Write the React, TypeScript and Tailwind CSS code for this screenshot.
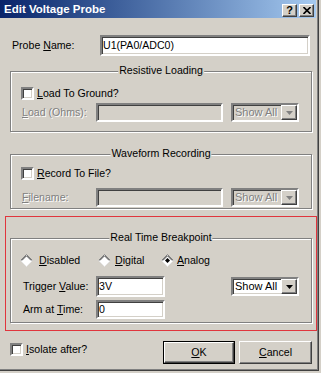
import React from "react";

const sunken =
  "border-2 border-t-[#808080] border-l-[#808080] border-b-white border-r-white shadow-[inset_1px_1px_0_#404040,inset_-1px_-1px_0_#d4d0c8]";
const raised =
  "border border-t-white border-l-white border-b-[#404040] border-r-[#404040] shadow-[inset_-1px_-1px_0_#808080]";
const grayText = "text-[#808080] [text-shadow:1px_1px_0_#ffffff]";

const Checkbox = () => <div className={`w-[13px] h-[13px] shrink-0 bg-white ${sunken}`} />;

const Radio = ({ checked }: { checked?: boolean }) => (
  <svg width="13" height="13" viewBox="0 0 13 13" className="shrink-0">
    <polygon points="6.5,0.5 12.5,6.5 6.5,12.5 0.5,6.5" fill="#fff" />
    <path d="M0.5 6.5 L6.5 0.5 L12.5 6.5" stroke="#808080" fill="none" />
    <path d="M1.8 6.5 L6.5 1.8 L11.2 6.5" stroke="#404040" fill="none" />
    <path d="M0.5 6.5 L6.5 12.5 L12.5 6.5" stroke="#e8e8e8" fill="none" />
    {checked && <polygon points="6.5,4 9,6.5 6.5,9 4,6.5" fill="#000" />}
  </svg>
);

const Combo = ({ disabled }: { disabled?: boolean }) => (
  <div className={`flex items-stretch w-[68px] h-[19px] ${sunken} ${disabled ? "bg-[#d4d0c8]" : "bg-white"}`}>
    <span className={`flex-1 pl-[2px] text-[11px] leading-[15px] ${disabled ? grayText : ""}`}>Show All</span>
    <div className={`w-[16px] bg-[#d4d0c8] flex items-center justify-center ${raised}`}>
      <svg width="7" height="4" viewBox="0 0 7 4">
        <polygon points="0,0 7,0 3.5,4" fill={disabled ? "#808080" : "#000"} />
      </svg>
    </div>
  </div>
);

const Group = ({ title, className, children }: { title: string; className: string; children: React.ReactNode }) => (
  <div className={`relative border border-[#808080] shadow-[inset_1px_1px_0_#fff,1px_1px_0_#fff] ${className}`}>
    <span className="absolute left-1/2 -translate-x-1/2 -top-[8px] bg-[#d4d0c8] px-[1px] leading-[13px] whitespace-nowrap">
      {title}
    </span>
    {children}
  </div>
);

const TitleButton = ({ children }: { children: React.ReactNode }) => (
  <div className={`w-[15px] h-[13px] bg-[#d4d0c8] flex items-center justify-center ${raised}`}>{children}</div>
);

export default function App() {
  return (
    <div className="w-[321px] h-[373px] bg-[#d4d0c8] text-[10.6px] text-black [font-family:'Liberation_Sans',Arial,sans-serif]">
      <div className="w-[319px] h-[371px] border-r border-b border-[#404040] shadow-[inset_-1px_-1px_0_#808080] flex flex-col">
        {/* Title bar */}
        <div className="h-[18px] mr-[2px] pl-[4px] pr-[2px] flex bg-gradient-to-r from-[#0a246a] to-[#a6caf0]">
          <span className="flex-1 self-center text-white font-bold text-[11.5px] leading-[14px]">Edit Voltage Probe</span>
          <div className="flex gap-[2px] mt-[4px]">
            <TitleButton>
              <span className="font-bold text-[11px] leading-[11px]">?</span>
            </TitleButton>
            <TitleButton>
              <svg width="8" height="7" viewBox="0 0 8 7">
                <path d="M0.5 0 L7.5 7 M7.5 0 L0.5 7" stroke="#000" strokeWidth="1.6" />
              </svg>
            </TitleButton>
          </div>
        </div>

        {/* Probe name */}
        <div className="mt-[17px] pl-[12px] flex items-center">
          <span className="w-[88px]">
            Probe <u>N</u>ame:
          </span>
          <div className={`w-[210px] h-[21px] bg-white pl-[1px] leading-[17px] ${sunken}`}>U1(PA0/ADC0)</div>
        </div>

        {/* Resistive Loading */}
        <Group title="Resistive Loading" className="ml-[10px] mt-[15px] w-[302px] h-[61px] pt-[15px] pl-[10px]">
          <div className="flex items-center h-[13px]">
            <Checkbox />
            <span className="ml-[3px]">
              <u>L</u>oad To Ground?
            </span>
          </div>
          <div className="mt-[3px] flex items-center">
            <span className={`w-[75px] pl-[1px] ${grayText}`}>
              <u>L</u>oad (Ohms):
            </span>
            <div className={`w-[127px] h-[19px] ${sunken}`} />
            <div className="ml-[8px]">
              <Combo disabled />
            </div>
          </div>
        </Group>

        {/* Waveform Recording */}
        <Group title="Waveform Recording" className="ml-[10px] mt-[22px] w-[302px] h-[55px] pt-[12px] pl-[10px]">
          <div className="flex items-center h-[13px]">
            <Checkbox />
            <span className="ml-[3px]">
              <u>R</u>ecord To File?
            </span>
          </div>
          <div className="mt-[8px] flex items-center">
            <span className={`w-[75px] pl-[1px] ${grayText}`}>
              <u>F</u>ilename:
            </span>
            <div className={`w-[127px] h-[19px] ${sunken}`} />
            <div className="ml-[8px]">
              <Combo disabled />
            </div>
          </div>
        </Group>

        {/* Real Time Breakpoint (highlighted) */}
        <div className="ml-[5px] mt-[7px] w-[312px] h-[115px] border border-[#e0353d] pt-[21px] pl-[4px]">
          <Group title="Real Time Breakpoint" className="w-[302px] h-[85px] pt-[15px] pl-[9px]">
            <div className="flex items-center h-[13px]">
              <div className="w-[78px] flex items-center">
                <Radio />
                <span className="ml-[6px]">
                  <u>D</u>isabled
                </span>
              </div>
              <div className="w-[63px] flex items-center">
                <Radio />
                <span className="ml-[4px]">
                  <u>D</u>igital
                </span>
              </div>
              <div className="flex items-center">
                <Radio checked />
                <span className="ml-[3px]">
                  <u>A</u>nalog
                </span>
              </div>
            </div>
            <div className="mt-[9px] flex items-center">
              <span className="w-[76px] pl-[3px]">
                Trigger <u>V</u>alue:
              </span>
              <div className={`w-[69px] h-[21px] bg-white pl-[1px] leading-[17px] ${sunken}`}>3V</div>
              <div className="ml-[66px]">
                <Combo />
              </div>
            </div>
            <div className="mt-[3px] flex items-center">
              <span className="w-[76px] pl-[3px]">
                Arm at <u>T</u>ime:
              </span>
              <div className={`w-[69px] h-[19px] bg-white pl-[1px] leading-[15px] ${sunken}`}>0</div>
            </div>
          </Group>
        </div>

        {/* Bottom row */}
        <div className="mt-[10px] pl-[10px] pr-[6px] flex items-start justify-between">
          <div className="mt-[2px] flex items-center h-[13px]">
            <Checkbox />
            <span className="ml-[3px]">
              <u>I</u>solate after?
            </span>
          </div>
          <div className="flex gap-[4px]">
            <div className="w-[72px] h-[23px] border border-black">
              <div className={`h-full bg-[#d4d0c8] flex items-center justify-center ${raised}`}>
                <span>
                  <u>O</u>K
                </span>
              </div>
            </div>
            <div className={`w-[73px] h-[23px] bg-[#d4d0c8] flex items-center justify-center ${raised}`}>
              <span>
                <u>C</u>ancel
              </span>
            </div>
          </div>
        </div>
      </div>
    </div>
  );
}
